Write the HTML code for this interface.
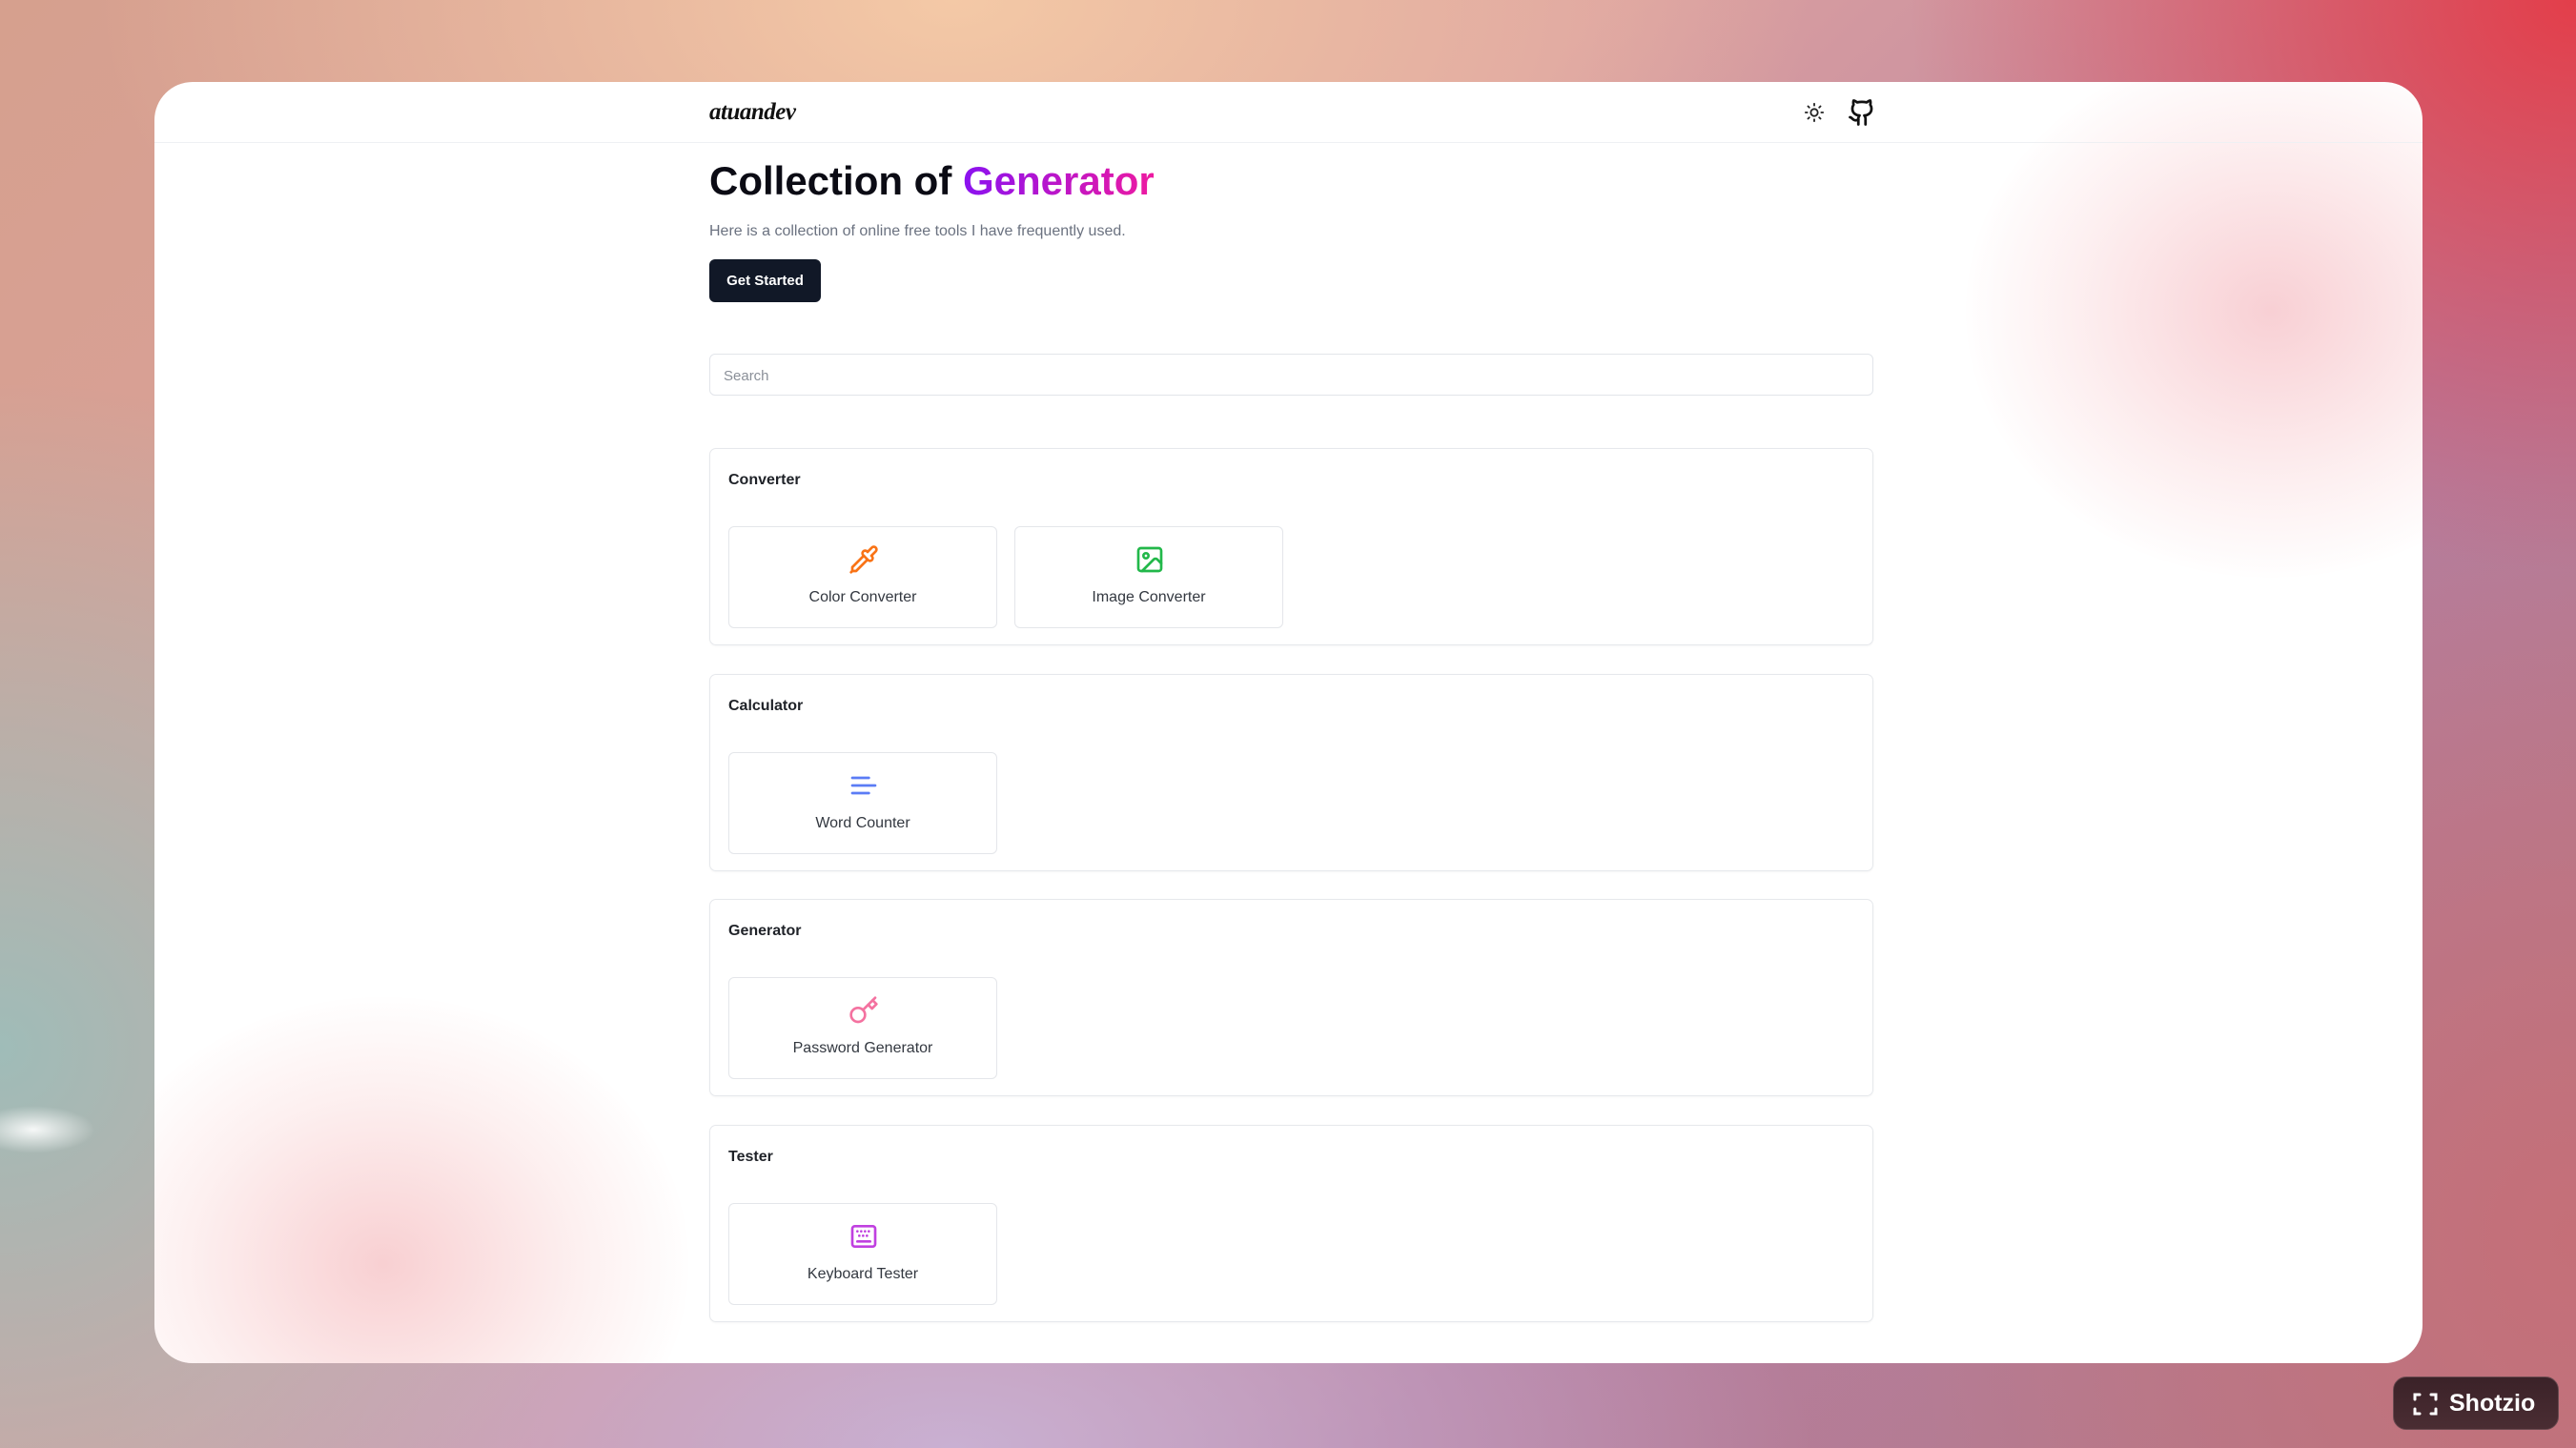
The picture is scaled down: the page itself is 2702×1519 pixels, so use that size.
<!DOCTYPE html>
<html><head><meta charset="utf-8"><style>
*{box-sizing:border-box;margin:0;padding:0}
html,body{width:2702px;height:1519px;overflow:hidden}
body{position:relative;font-family:"Liberation Sans",sans-serif;
background:
radial-gradient(ellipse 900px 500px at 1000px 0px,#f4c9a6 0%,rgba(244,201,166,0) 100%),
radial-gradient(ellipse 700px 600px at 2702px 0px,#e33e4a 0%,rgba(227,62,74,0) 100%),
radial-gradient(ellipse 700px 700px at 0px 1100px,#9fbcb8 0%,rgba(159,188,184,0) 100%),
radial-gradient(ellipse 900px 400px at 1000px 1519px,#c9b0d2 0%,rgba(201,176,210,0) 100%),
radial-gradient(ellipse 700px 800px at 2702px 1300px,#c56f78 0%,rgba(197,111,120,0) 100%),
linear-gradient(135deg,#d6a08e 0%,#dba0a0 40%,#b57ea0 70%,#b47a85 100%);}
.win{position:absolute;left:162px;top:86px;width:2379px;height:1344px;border-radius:40px;background:#fff;overflow:hidden}
.blob1{position:absolute;left:1900px;top:-40px;width:640px;height:560px;border-radius:50%;background:radial-gradient(ellipse at center,rgba(240,150,160,.45) 0%,rgba(245,180,185,.22) 45%,rgba(255,255,255,0) 72%)}
.blob2{position:absolute;left:-80px;top:960px;width:640px;height:560px;border-radius:50%;background:radial-gradient(ellipse at center,rgba(240,150,155,.45) 0%,rgba(245,185,185,.22) 45%,rgba(255,255,255,0) 72%)}
.hdr{position:absolute;left:0;top:0;width:100%;height:64px;border-bottom:1px solid #eef0f3}
.logo{position:absolute;left:582px;top:18px;font-family:"Liberation Serif",serif;font-style:italic;font-weight:bold;font-size:25px;color:#111;letter-spacing:-0.5px}
.c{position:absolute;left:582px}
h1{position:absolute;left:582px;top:80px;font-size:42px;font-weight:bold;color:#0b0b14}
h1 span{background:linear-gradient(90deg,#8a12f0,#ee1aa0);-webkit-background-clip:text;background-clip:text;color:transparent}
.sub{top:148px;font-size:16px;color:#6b7280}
.btn{top:186px;width:117px;height:45px;border-radius:6px;background:#111827;color:#fff;font-size:15px;font-weight:bold;line-height:45px;text-align:center}
.search{top:285px;width:1221px;height:44px;border:1px solid #e2e5ea;border-radius:6px;font-size:15px;color:#8a8f98;padding:14px 14px}
.card{position:absolute;left:582px;width:1221px;height:207px;border:1px solid #e6e8ec;border-radius:7px;background:rgba(255,255,255,.6);box-shadow:0 1px 2px rgba(0,0,0,.04)}
.card h3{position:absolute;left:19px;top:24px;font-size:16px;font-weight:bold;color:#1f2228}
.tile{position:absolute;top:81px;width:282px;height:107px;border:1px solid #e4e6ea;border-radius:6px;background:#fff;text-align:center}
.tile svg{position:absolute;left:125px;top:18px}
.tile p{position:absolute;left:0;width:100%;top:65px;font-size:16px;color:#333840}
.shot{position:absolute;left:2510px;top:1444px;width:174px;height:56px;border-radius:14px;background:linear-gradient(#3b2228,#4a2d33);border:1px solid #6a4a50;color:#fff;font-weight:bold;font-size:25px;line-height:54px;padding-left:58px}
</style></head><body>
<div style="position:absolute;left:-30px;top:1160px;width:130px;height:50px;border-radius:50%;background:radial-gradient(rgba(255,255,255,.9),rgba(255,255,255,0) 70%)"></div>
<div class="win">
<div class="blob1"></div><div class="blob2"></div>
<div class="hdr">
<div class="logo">atuandev</div>
<svg style="position:absolute;left:1730px;top:21px" width="22" height="22" viewBox="0 0 24 24" fill="none" stroke="#222" stroke-width="2" stroke-linecap="round"><circle cx="12" cy="12" r="4"/><path d="M12 2v2M12 20v2M4.9 4.9l1.4 1.4M17.7 17.7l1.4 1.4M2 12h2M20 12h2M4.9 19.1l1.4-1.4M17.7 6.3l1.4-1.4"/></svg>
<svg style="position:absolute;left:1776px;top:17px" width="30" height="30" viewBox="0 0 24 24" fill="none" stroke="#111" stroke-width="2.2" stroke-linecap="round" stroke-linejoin="round"><path d="M15 22v-4a4.8 4.8 0 0 0-1-3.5c3 0 6-2 6-5.5.08-1.25-.27-2.48-1-3.5.28-1.15.28-2.35 0-3.5 0 0-1 0-3 1.5-2.640-.5-5.36-.5-8 0C6 2 5 2 5 2c-.3 1.15-.3 2.35 0 3.5A5.4 5.4 0 0 0 4 9c0 3.5 3 5.5 6 5.5-.39.49-.68 1.05-.85 1.65-.17.6-.22 1.23-.15 1.85v4"/><path d="M9 18c-4.51 2-5-2-7-2"/></svg>
</div>
<h1>Collection of <span>Generator</span></h1>
<div class="c sub">Here is a collection of online free tools I have frequently used.</div>
<div class="c btn">Get Started</div>
<div class="c search">Search</div>

<div class="card" style="top:384px"><h3>Converter</h3>
<div class="tile" style="left:19px"><svg width="32" height="32" viewBox="0 0 24 24" fill="none" stroke="#f97316" stroke-width="2" stroke-linecap="round" stroke-linejoin="round"><path d="m2 22 1-1h3l9-9"/><path d="M3 21v-3l9-9"/><path d="m15 6 3.4-3.4a2.1 2.1 0 1 1 3 3L18 9l.4.4a2.1 2.1 0 1 1-3 3l-3.8-3.8a2.1 2.1 0 1 1 3-3l.4.4Z"/></svg><p>Color Converter</p></div>
<div class="tile" style="left:319px"><svg width="32" height="32" viewBox="0 0 24 24" fill="none" stroke="#22b84a" stroke-width="2" stroke-linecap="round" stroke-linejoin="round"><rect x="3" y="3" width="18" height="18" rx="2"/><circle cx="9" cy="9" r="2"/><path d="m21 15-3.1-3.1a2 2 0 0 0-2.8 0L6 21"/></svg><p>Image Converter</p></div>
</div>
<div class="card" style="top:621px"><h3>Calculator</h3>
<div class="tile" style="left:19px"><svg width="32" height="32" viewBox="0 0 24 24" fill="none" stroke="#5b7cf5" stroke-width="2" stroke-linecap="round"><path d="M3 6h13M3 12h18M3 18h13"/></svg><p>Word Counter</p></div>
</div>
<div class="card" style="top:857px"><h3>Generator</h3>
<div class="tile" style="left:19px"><svg width="32" height="32" viewBox="0 0 24 24" fill="none" stroke="#f472a0" stroke-width="2" stroke-linecap="round" stroke-linejoin="round"><circle cx="7.5" cy="15.5" r="5.5"/><path d="m21 2-9.6 9.6"/><path d="m15.5 7.5 3 3L22 7l-3-3"/></svg><p>Password Generator</p></div>
</div>
<div class="card" style="top:1094px"><h3>Tester</h3>
<div class="tile" style="left:19px"><svg width="32" height="32" viewBox="0 0 24 24" fill="none" stroke="#c040e0" stroke-width="2" stroke-linecap="round"><rect x="3" y="4" width="18" height="16" rx="2"/><path d="M7 8h0M10 8h0M13 8h0M16 8h0M8.5 11.5h0M11.5 11.5h0M14.5 11.5h0M7 16h10"/></svg><p>Keyboard Tester</p></div>
</div>
</div>
<div class="shot"><svg style="position:absolute;left:20px;top:15px" width="26" height="26" viewBox="0 0 26 26" fill="none" stroke="#fff" stroke-width="3" stroke-linecap="round"><path d="M2 8V3h5M19 3h5v5M24 18v5h-5M7 23H2v-5"/></svg>Shotzio</div>
</body></html>
